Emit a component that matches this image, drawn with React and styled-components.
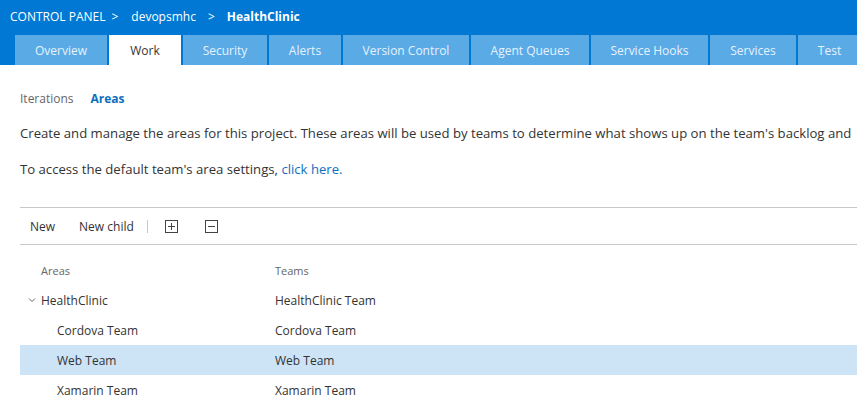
import React from 'react'
import styled, { createGlobalStyle } from "styled-components";

const GlobalStyle = createGlobalStyle`
  html, body {
    margin: 0;
    padding: 0;
    background: #fff;
    overflow: hidden;
  }
  body {
    font-family: "Segoe UI", "Open Sans", "Noto Sans", sans-serif;
    color: #333;
  }
`;

const tabs = [
  { label: "Overview", width: 92 },
  { label: "Work", width: 72, active: true },
  { label: "Security", width: 84 },
  { label: "Alerts", width: 72 },
  { label: "Version Control", width: 126 },
  { label: "Agent Queues", width: 118 },
  { label: "Service Hooks", width: 117 },
  { label: "Services", width: 86 },
  { label: "Test", width: 63 },
];

const areas = [
  { name: "HealthClinic", team: "HealthClinic Team", level: 0, expanded: true },
  { name: "Cordova Team", team: "Cordova Team", level: 1 },
  { name: "Web Team", team: "Web Team", level: 1, selected: true },
  { name: "Xamarin Team", team: "Xamarin Team", level: 1 },
];

const Chevron = () => (
  <svg width="8" height="6" viewBox="0 0 8 6">
    <path d="M1 1.5 L4 4.5 L7 1.5" fill="none" stroke="#666" strokeWidth="1" />
  </svg>
);

const BoxIcon = ({ plus }) => (
  <svg width="13" height="13" viewBox="0 0 13 13">
    <rect x="0.5" y="0.5" width="12" height="12" fill="none" stroke="#444" />
    <path d="M3 6.5 H10" stroke="#444" />
    {plus && <path d="M6.5 3 V10" stroke="#444" />}
  </svg>
);

const App = () => {
  return (
    <Page>
      <GlobalStyle />
      <Header>
        <Breadcrumb>
          <span>CONTROL PANEL</span>
          <Sep $left={6} $right={13}>&gt;</Sep>
          <span>devopsmhc</span>
          <Sep $left={12} $right={12}>&gt;</Sep>
          <b>HealthClinic</b>
        </Breadcrumb>
        <Tabs>
          {tabs.map((t) => (
            <Tab key={t.label} $active={t.active} style={{ width: t.width }}>
              {t.label}
            </Tab>
          ))}
        </Tabs>
      </Header>
      <Content>
        <Pivots>
          <Pivot>Iterations</Pivot>
          <Pivot $active>Areas</Pivot>
        </Pivots>
        <Description $gap={11}>
          Create and manage the areas for this project. These areas will be used by teams to determine what shows up on the team's backlog and
        </Description>
        <Description $gap={16}>
          To access the default team's area settings, <Link>click here.</Link>
        </Description>
        <Toolbar>
          <ToolButton>New</ToolButton>
          <ToolButton>New child</ToolButton>
          <Separator />
          <IconButton><BoxIcon plus /></IconButton>
          <IconButton><BoxIcon /></IconButton>
        </Toolbar>
        <Grid>
          <HeaderRow>
            <AreaCell $level={0}>Areas</AreaCell>
            <TeamCell>Teams</TeamCell>
          </HeaderRow>
          {areas.map((a) => (
            <Row key={a.name} $selected={a.selected}>
              <AreaCell $level={a.level}>
                {a.expanded && <Toggle><Chevron /></Toggle>}
                {a.name}
              </AreaCell>
              <TeamCell>{a.team}</TeamCell>
            </Row>
          ))}
        </Grid>
      </Content>
    </Page>
  )
}

const Page = styled.div`
  width: 857px;
  height: 409px;
  overflow: hidden;
`;

const Header = styled.div`
  background-color: #0078d4;
  display: flex;
  flex-direction: column;
`;

const Breadcrumb = styled.div`
  height: 35px;
  display: flex;
  align-items: center;
  padding-left: 10px;
  padding-bottom: 2px;
  box-sizing: border-box;
  font-size: 12px;
  color: #fff;
  white-space: nowrap;
  b {
    font-weight: 700;
  }
`;

const Sep = styled.span`
  margin-left: ${(p) => p.$left}px;
  margin-right: ${(p) => p.$right}px;
`;

const Tabs = styled.div`
  display: flex;
  gap: 2px;
  padding-left: 15px;
`;

const Tab = styled.div`
  height: 30px;
  flex-shrink: 0;
  display: flex;
  align-items: center;
  justify-content: center;
  font-size: 12px;
  white-space: nowrap;
  background-color: ${(p) => (p.$active ? "#fff" : "#5aaae6")};
  color: ${(p) => (p.$active ? "#333" : "#e6f2fc")};
`;

const Content = styled.div`
  padding-left: 20px;
`;

const Pivots = styled.div`
  display: flex;
  gap: 17px;
  height: 28px;
  align-items: center;
  margin-top: 19px;
`;

const Pivot = styled.div`
  font-size: 12px;
  color: ${(p) => (p.$active ? "#106ebe" : "#666")};
  font-weight: ${(p) => (p.$active ? 700 : 400)};
`;

const Description = styled.div`
  font-size: 13.15px;
  color: #333;
  white-space: nowrap;
  height: 20px;
  line-height: 20px;
  margin-top: ${(p) => p.$gap}px;
`;

const Link = styled.span`
  color: #106ebe;
`;

const Toolbar = styled.div`
  margin-top: 28px;
  height: 36px;
  border-top: 1px solid #c8c8c8;
  border-bottom: 1px solid #c8c8c8;
  display: flex;
  align-items: center;
  padding-left: 10px;
`;

const ToolButton = styled.div`
  font-size: 12px;
  color: #333;
  margin-right: 24px;
  &:nth-child(2) {
    margin-right: 13px;
  }
`;

const Separator = styled.div`
  width: 1px;
  height: 13px;
  background-color: #c8c8c8;
  margin-right: 17px;
`;

const IconButton = styled.div`
  display: flex;
  align-items: center;
  margin-right: 27px;
`;

const Grid = styled.div`
  margin-top: 10px;
  display: flex;
  flex-direction: column;
`;

const HeaderRow = styled.div`
  display: flex;
  height: 30px;
  align-items: center;
  font-size: 11px;
  color: #666;
`;

const Row = styled.div`
  display: flex;
  height: 30px;
  align-items: center;
  font-size: 12px;
  color: #333;
  background-color: ${(p) => (p.$selected ? "#cce4f6" : "transparent")};
`;

const AreaCell = styled.div`
  box-sizing: border-box;
  width: 255px;
  flex-shrink: 0;
  display: flex;
  align-items: center;
  padding-left: ${(p) => 21 + p.$level * 16}px;
  position: relative;
`;

const Toggle = styled.span`
  position: absolute;
  left: 8px;
  display: flex;
  align-items: center;
`;

const TeamCell = styled.div`
  flex: 1;
`;

export default App
